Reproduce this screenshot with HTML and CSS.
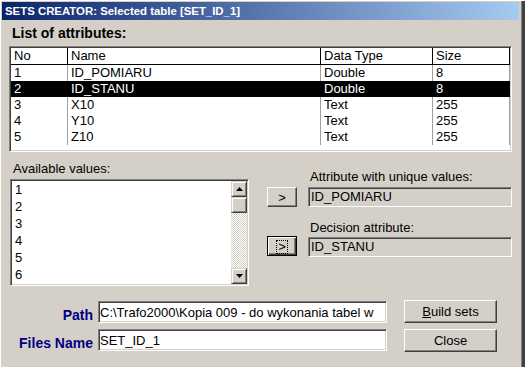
FILE: index.html
```html
<!DOCTYPE html>
<html lang="en">
<head>
  <meta charset="UTF-8">
  <link rel="stylesheet" href="styles.css">
</head>
<body>
  <div class="window">
    <div class="titlebar">SETS CREATOR: Selected table [SET_ID_1]</div>
    <div class="content">
      <div class="heading">List of attributes:</div>
      <div class="listview">
        <div class="row head">
          <div>No</div><div>Name</div><div>Data Type</div><div>Size</div>
        </div>
        <div class="row">
          <div>1</div><div>ID_POMIARU</div><div>Double</div><div>8</div>
        </div>
        <div class="row selected">
          <div>2</div><div>ID_STANU</div><div>Double</div><div>8</div>
        </div>
        <div class="row">
          <div>3</div><div>X10</div><div>Text</div><div>255</div>
        </div>
        <div class="row">
          <div>4</div><div>Y10</div><div>Text</div><div>255</div>
        </div>
        <div class="row">
          <div>5</div><div>Z10</div><div>Text</div><div>255</div>
        </div>
      </div>

      <div class="middle">
        <div class="values">
          <div class="label">Available values:</div>
          <div class="listbox">
            <div class="items">
              <div>1</div><div>2</div><div>3</div><div>4</div><div>5</div><div>6</div>
            </div>
            <div class="scrollbar">
              <div class="sb-btn">
                <svg width="7" height="4" viewBox="0 0 7 4"><polygon points="3.5,0 7,4 0,4" fill="#000"/></svg>
              </div>
              <div class="sb-btn"></div>
              <div class="sb-track"></div>
              <div class="sb-btn">
                <svg width="7" height="4" viewBox="0 0 7 4"><polygon points="0,0 7,0 3.5,4" fill="#000"/></svg>
              </div>
            </div>
          </div>
        </div>

        <div class="arrows">
          <button class="btn small">&gt;</button>
          <button class="btn small default"><span class="focus">&gt;</span></button>
        </div>

        <div class="attrs">
          <div class="label">Attribute with unique values:</div>
          <div class="field">ID_POMIARU</div>
          <div class="label second">Decision attribute:</div>
          <div class="field last">ID_STANU</div>
        </div>
      </div>

      <div class="bottom">
        <div class="form">
          <label class="caption">Path</label>
          <input class="edit" type="text" readonly value="C:\Trafo2000\Kopia 009 - do wykonania tabel w">
          <label class="caption">Files Name</label>
          <input class="edit" type="text" value="SET_ID_1">
        </div>
        <div class="actions">
          <button class="btn wide"><u>B</u>uild sets</button>
          <button class="btn wide">Close</button>
        </div>
      </div>
    </div>
  </div>
</body>
</html>
```

FILE: styles.css
```css
body {
  margin: 0;
  font-family: "Liberation Sans", Arial, sans-serif;
  font-size: 13px;
  color: #000;
}
.window {
  width: 525px;
  height: 367px;
  box-sizing: border-box;
  padding: 2px 6px 0 2px;
  background: #d4d0c8;
  box-shadow: inset 1px 1px #fff, inset -3px 0 #404040, inset -4px 0 #808080;
  overflow: hidden;
}
.titlebar {
  height: 18px;
  line-height: 18px;
  padding-left: 3px;
  color: #fff;
  font-weight: bold;
  font-size: 11.4px;
  white-space: nowrap;
  background: linear-gradient(to right, #0a246a, #a6caf0);
}
.content {
  padding: 0 7px;
}
.heading {
  margin-top: 5px;
  padding-left: 3px;
  font-size: 14px;
  font-weight: bold;
  line-height: 16px;
}

/* list view */
.listview {
  margin-top: 5px;
  height: 106px;
  box-sizing: border-box;
  background: #fff;
  border: 1px solid;
  border-color: #808080 #fff #fff #808080;
  box-shadow: inset 1px 1px #404040, inset -1px -1px #d4d0c8;
  padding: 1px;
  overflow: hidden;
}
.row {
  display: grid;
  grid-template-columns: 57px 253px 112px 77px;
  height: 16px;
  line-height: 16px;
  white-space: nowrap;
}
.row div {
  box-sizing: border-box;
  padding-left: 3px;
  border-right: 1px solid #a0a0a0;
  overflow: hidden;
}
.row.head {
  line-height: 15px;
  border-bottom: 1px solid #000;
}
.row.head div {
  border-right-color: #000;
}
.row.selected {
  background: #000;
  color: #fff;
}
.row.selected div {
  border-right-color: #000;
}

/* middle part */
.middle {
  display: flex;
  height: 134px;
}
.label {
  line-height: 16px;
  white-space: nowrap;
}
.values {
  margin-left: 1px;
  width: 239px;
  padding-top: 9px;
}
.values .label {
  padding-left: 3px;
}
.listbox {
  margin-top: 2px;
  height: 107px;
  box-sizing: border-box;
  display: flex;
  background: #fff;
  border: 1px solid;
  border-color: #808080 #fff #fff #808080;
  box-shadow: inset 1px 1px #404040, inset -1px -1px #d4d0c8;
  padding: 1px;
}
.items {
  flex: 1;
  padding-left: 3px;
  line-height: 17px;
  overflow: hidden;
}
.scrollbar {
  width: 16px;
  display: flex;
  flex-direction: column;
}
.sb-btn {
  height: 16px;
  box-sizing: border-box;
  display: flex;
  align-items: center;
  justify-content: center;
  background: #d4d0c8;
  border: 1px solid;
  border-color: #d4d0c8 #404040 #404040 #d4d0c8;
  box-shadow: inset 1px 1px #fff, inset -1px -1px #808080;
}
.sb-track {
  flex: 1;
  background: repeating-conic-gradient(#fff 0 25%, #d4d0c8 0 50%) 0 0 / 2px 2px;
}
.arrows {
  margin-left: 18px;
  width: 30px;
  padding-top: 35px;
  display: flex;
  flex-direction: column;
  gap: 29px;
}
.btn {
  font-family: "Liberation Sans", Arial, sans-serif;
  font-size: 13px;
  color: #000;
  background: #d4d0c8;
  box-sizing: border-box;
  border: 1px solid;
  border-color: #fff #404040 #404040 #fff;
  box-shadow: inset -1px -1px #808080;
  padding: 0;
  margin: 0;
}
.btn.small {
  height: 20px;
  width: 30px;
}
.btn.default {
  border: 1px solid #000;
  box-shadow: inset 1px 1px #fff, inset -1px -1px #404040, inset -2px -2px #808080;
}
.focus {
  display: inline-block;
  box-sizing: border-box;
  width: 12px;
  height: 14px;
  border: 1px dotted #000;
  line-height: 12px;
  text-align: center;
  vertical-align: middle;
}
.attrs {
  margin-left: 11px;
  width: 204px;
  padding-top: 17px;
}
.attrs .label {
  padding-left: 2px;
}
.attrs .label.second {
  margin-top: 13px;
}
.field {
  margin-top: 2px;
  height: 20px;
  line-height: 17px;
  box-sizing: border-box;
  padding-left: 2px;
  background: #d4d0c8;
  border: 1px solid;
  border-color: #808080 #fff #fff #808080;
  box-shadow: inset 1px 1px #404040, inset -1px -1px #d4d0c8;
}
.field.last {
  margin-top: 1px;
}

/* bottom part */
.bottom {
  display: flex;
  margin-top: 14px;
}
.form {
  display: grid;
  grid-template-columns: 84px 289px;
  grid-auto-rows: 22px;
  column-gap: 5px;
  row-gap: 6px;
  padding-top: 1px;
}
.caption {
  align-self: end;
  text-align: right;
  font-size: 14px;
  font-weight: bold;
  line-height: 16px;
  color: #000080;
  white-space: nowrap;
}
.edit {
  height: 22px;
  box-sizing: border-box;
  margin: 0;
  padding: 0 1px;
  font-family: "Liberation Sans", Arial, sans-serif;
  font-size: 13px;
  color: #000;
  background: #fff;
  border: 1px solid;
  border-color: #808080 #fff #fff #808080;
  box-shadow: inset 1px 1px #404040, inset -1px -1px #d4d0c8;
  outline: none;
}
.actions {
  margin-left: 17px;
  display: flex;
  flex-direction: column;
  gap: 6px;
}
.btn.wide {
  width: 93px;
  height: 23px;
}
```
